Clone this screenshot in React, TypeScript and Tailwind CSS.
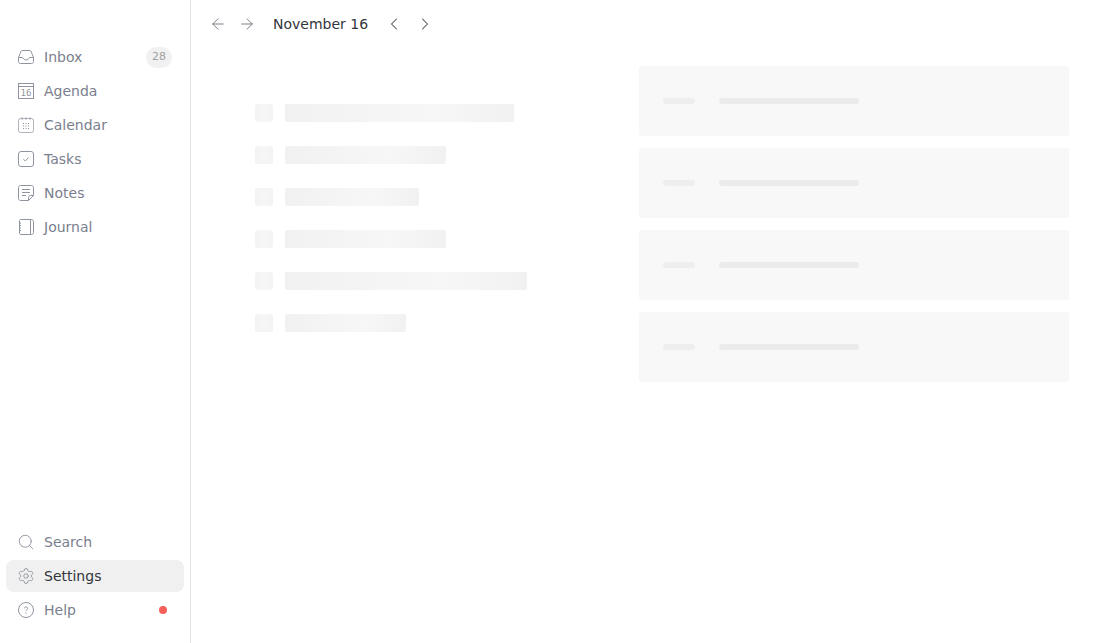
import { ArrowLeft, ArrowRight, ChevronLeft, ChevronRight, Search, Settings } from "lucide-react";
import { ReactNode } from "react";

const InboxIcon = () => (
  <svg width="18" height="18" viewBox="0 0 18 18" fill="none" stroke="currentColor" strokeWidth="1">
    <path d="M1.500 9.500 4 3.200c.2-.5.600-.7 1.100-.7h7.800c.5 0 .9.200 1.100.7l2.500 6.300v4.200c0 1-.8 1.800-1.800 1.800H3.300c-1 0-1.800-.8-1.800-1.800z" />
    <path d="M1.500 9.500H5c.6 0 1 .3 1.300.8l.4.7c.3.500.7.800 1.300.800h2c.6 0 1-.3 1.300-.8l.4-.7c.3-.5.700-.8 1.300-.8h3.500" />
  </svg>
);

const AgendaIcon = () => (
  <svg width="18" height="18" viewBox="0 0 18 18" fill="none" stroke="currentColor" strokeWidth="1">
    <rect x="1.500" y="1.500" width="15" height="15" />
    <path d="M1.500 4.500h15" />
    <text
      x="9"
      y="14"
      textAnchor="middle"
      fontSize="9"
      fontFamily="'DejaVu Sans Mono', monospace"
      fill="currentColor"
      stroke="none"
    >
      16
    </text>
  </svg>
);

const CalendarIcon = () => (
  <svg width="18" height="18" viewBox="0 0 18 18" fill="none" stroke="currentColor" strokeWidth="1">
    <rect x="1.500" y="2.500" width="15" height="14" rx="2" className="opacity-70" />
    <path d="M5 1v3M9 1v3M13 1v3" className="opacity-70" />
    <path d="M6 7.500h1M8.500 7.500h1M11 7.500h1M6 10h1M8.500 10h1M11 10h1M6 12.500h1M8.500 12.500h1M11 12.500h1" />
  </svg>
);

const TasksIcon = () => (
  <svg width="18" height="18" viewBox="0 0 18 18" fill="none" stroke="currentColor" strokeWidth="1">
    <rect x="1.500" y="1.500" width="15" height="15" rx="2.500" />
    <path d="m6.500 9.200 1.800 1.800 3.200-3.500" />
  </svg>
);

const NotesIcon = () => (
  <svg width="18" height="18" viewBox="0 0 18 18" fill="none" stroke="currentColor" strokeWidth="1">
    <path d="M11.500 16.500H3.500c-1.100 0-2-.9-2-2v-11c0-1.100.9-2 2-2h11c1.100 0 2 .9 2 2v8z" />
    <path d="M16.500 11.500h-3c-1.100 0-2 .9-2 2v3" />
    <path d="M5 5.500h8M5 8.500h8M5 11.500h4" />
  </svg>
);

const JournalIcon = () => (
  <svg width="18" height="18" viewBox="0 0 18 18" fill="none" stroke="currentColor" strokeWidth="1">
    <path d="M4 1.500h10.500c1.100 0 2 .9 2 2v11c0 1.100-.9 2-2 2H4c-.8 0-1.500-.7-1.500-1.500V3c0-.8.7-1.500 1.500-1.500z" />
    <path d="M13.500 1.500v15" />
    <path d="M2 5h2M2 7.500h2M2 10h2M2 12.500h2" />
  </svg>
);

const HelpIcon = () => (
  <svg width="18" height="18" viewBox="0 0 18 18" fill="none" stroke="currentColor" strokeWidth="1">
    <circle cx="9" cy="9" r="7.500" />
    <path d="M7.400 7.400c0-.9.700-1.500 1.600-1.500s1.600.6 1.600 1.400c0 1.200-1.600 1.300-1.600 2.600" />
    <path d="M9 11.500v1" />
  </svg>
);

const NavItem = (props: {
  icon: ReactNode;
  label: string;
  active?: boolean;
  children?: ReactNode;
}) => (
  <a
    className={
      props.active
        ? "flex h-8 items-center gap-[9px] rounded-lg bg-[#f0f0f0] pl-[11px] pr-3 text-[#33363c]"
        : "flex h-8 items-center gap-[9px] rounded-lg pl-[11px] pr-3 text-[#7a808d]"
    }
  >
    <span className="text-[#8f95a0]">{props.icon}</span>
    <span className="flex-1">{props.label}</span>
    {props.children}
  </a>
);

const listWidths = ["w-[229px]", "w-[161px]", "w-[134px]", "w-[161px]", "w-[242px]", "w-[121px]"];

const SkeletonRow = (props: { width: string }) => (
  <div className="flex gap-3">
    <div className="h-[18px] w-[18px] rounded-[3px] bg-gradient-to-r from-[#f3f3f3] via-[#f6f6f6] to-[#f3f3f3]" />
    <div className={`h-[18px] rounded-[2px] bg-gradient-to-r from-[#f1f1f1] via-[#f7f7f7] via-65% to-[#f1f1f1] ${props.width}`} />
  </div>
);

const SkeletonCard = () => (
  <div className="flex h-[70px] w-[430px] items-center gap-6 rounded-[3px] bg-[#f8f8f8] pl-6">
    <div className="h-1.5 w-8 rounded-full bg-[#eeeeee]" />
    <div className="h-1.5 w-[140px] rounded-full bg-[#ebebeb]" />
  </div>
);

export default function App() {
  return (
    <div className="flex h-[643px] w-full bg-white font-['DejaVu_Sans',sans-serif] text-sm">
      <aside className="flex w-[191px] shrink-0 flex-col justify-between border-r border-[#e3e3e3] px-1.5 pb-[17px] pt-[41px]">
        <nav className="flex flex-col gap-0.5">
          <NavItem icon={<InboxIcon />} label="Inbox">
            <span className="flex h-[21px] w-[26px] items-center justify-center rounded-full bg-[#f1f1f1] text-[11px] text-[#a0a0a0]">
              28
            </span>
          </NavItem>
          <NavItem icon={<AgendaIcon />} label="Agenda" />
          <NavItem icon={<CalendarIcon />} label="Calendar" />
          <NavItem icon={<TasksIcon />} label="Tasks" />
          <NavItem icon={<NotesIcon />} label="Notes" />
          <NavItem icon={<JournalIcon />} label="Journal" />
        </nav>
        <nav className="flex flex-col gap-0.5">
          <NavItem icon={<Search size={18} strokeWidth={1.25} />} label="Search" />
          <NavItem icon={<Settings size={18} strokeWidth={1.25} />} label="Settings" active />
          <NavItem icon={<HelpIcon />} label="Help">
            <span className="mr-[5px] h-2 w-2 rounded-full bg-[#f9605a]" />
          </NavItem>
        </nav>
      </aside>

      <main className="flex-1">
        <header className="flex h-12 items-center pl-[18px] text-[#33363c]">
          <ArrowLeft size={18} strokeWidth={1.25} className="text-[#6f7580]" />
          <ArrowRight size={18} strokeWidth={1.25} className="ml-[11px] text-[#6f7580]" />
          <span className="ml-[17px] w-[94px] whitespace-nowrap">November 16</span>
          <ChevronLeft size={20} strokeWidth={1.25} className="ml-[17px] text-[#4b4f57]" />
          <ChevronRight size={20} strokeWidth={1.25} className="ml-[11px] text-[#4b4f57]" />
        </header>

        <div className="flex justify-between pl-16 pr-[47px] pt-[18px]">
          <div className="flex flex-col gap-6 pt-[38px]">
            {listWidths.map((width, i) => (
              <SkeletonRow key={i} width={width} />
            ))}
          </div>
          <div className="flex flex-col gap-3">
            <SkeletonCard />
            <SkeletonCard />
            <SkeletonCard />
            <SkeletonCard />
          </div>
        </div>
      </main>
    </div>
  );
}
